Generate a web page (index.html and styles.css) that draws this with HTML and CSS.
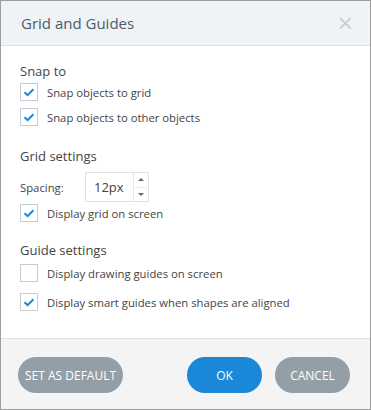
FILE: index.html
```html
<!DOCTYPE html>
<html>
<head>
    <meta charset="UTF-8">
    <title>Grid and Guides</title>
    <link rel="stylesheet" href="styles.css">
</head>
<body>
    <div class="dialog">
        <div class="dialog-header">
            <span class="dialog-title">Grid and Guides</span>
            <button class="close-button">&times;</button>
        </div>

        <div class="dialog-body">
            <div class="section-title">Snap to</div>
            <label class="check-row">
                <span class="checkbox checked">
                    <svg width="18" height="18" viewBox="0 0 18 18"><path d="M4.5 9.2 L7.6 12.2 L13.4 6.2" fill="none" stroke="#1b86d6" stroke-width="2"/></svg>
                </span>
                Snap objects to grid
            </label>
            <label class="check-row">
                <span class="checkbox checked">
                    <svg width="18" height="18" viewBox="0 0 18 18"><path d="M4.5 9.2 L7.6 12.2 L13.4 6.2" fill="none" stroke="#1b86d6" stroke-width="2"/></svg>
                </span>
                Snap objects to other objects
            </label>

            <div class="section-title grid-title">Grid settings</div>
            <div class="spacing-row">
                <span class="spacing-label">Spacing:</span>
                <div class="spinner">
                    <span class="spinner-value">12px</span>
                    <div class="spinner-buttons">
                        <span class="spin-up"></span>
                        <span class="spin-down"></span>
                    </div>
                </div>
            </div>
            <label class="check-row">
                <span class="checkbox checked">
                    <svg width="18" height="18" viewBox="0 0 18 18"><path d="M4.5 9.2 L7.6 12.2 L13.4 6.2" fill="none" stroke="#1b86d6" stroke-width="2"/></svg>
                </span>
                Display grid on screen
            </label>

            <div class="section-title guide-title">Guide settings</div>
            <label class="check-row">
                <span class="checkbox"></span>
                Display drawing guides on screen
            </label>
            <label class="check-row smart-row">
                <span class="checkbox checked">
                    <svg width="18" height="18" viewBox="0 0 18 18"><path d="M4.5 9.2 L7.6 12.2 L13.4 6.2" fill="none" stroke="#1b86d6" stroke-width="2"/></svg>
                </span>
                Display smart guides when shapes are aligned
            </label>
        </div>

        <div class="dialog-footer">
            <button class="btn btn-gray">SET AS DEFAULT</button>
            <div class="footer-right">
                <button class="btn btn-blue">OK</button>
                <button class="btn btn-gray">CANCEL</button>
            </div>
        </div>
    </div>
</body>
</html>
```

FILE: styles.css
```css
/* Dialog "Grid and Guides" */
body {
    margin: 0;
    font-family: "Open Sans", "Noto Sans", sans-serif;
    color: #444;
    background-color: #fff;
}

.dialog {
    width: 371px;
    height: 410px;
    box-sizing: border-box;
    border: 1px solid #9e9e9e;
    display: flex;
    flex-direction: column;
    background-color: #fff;
}

.dialog-header {
    height: 44px;
    flex-shrink: 0;
    background-color: #eff3f6;
    border-bottom: 1px solid #dce1e5;
    display: flex;
    align-items: center;
    justify-content: space-between;
    padding: 0 16px 0 20px;
}

.dialog-title {
    font-size: 15px;
    color: #4c5b6a;
}

.close-button {
    border: none;
    background-color: transparent;
    color: #c9cdd1;
    font-size: 21px;
    line-height: 1;
    padding: 0;
    cursor: pointer;
    font-family: "DejaVu Sans", sans-serif;
}

/* Cuerpo */
.dialog-body {
    flex: 1;
    padding: 15px 19px 0 19px;
}

.section-title {
    font-size: 13px;
    line-height: 20px;
    color: #444;
    margin-bottom: 2px;
}

.grid-title {
    margin-top: 20px;
    margin-bottom: 6px;
}

.guide-title {
    margin-top: 18px;
    margin-bottom: 4px;
}

.check-row {
    display: flex;
    align-items: center;
    gap: 9px;
    height: 18px;
    font-size: 11.3px;
    color: #444;
    margin-bottom: 7px;
}

.smart-row {
    margin-top: 11px;
}

.checkbox {
    width: 16px;
    height: 16px;
    border: 1px solid #c5ccd3;
    background-color: #fff;
    position: relative;
    flex-shrink: 0;
}

.checkbox svg {
    position: absolute;
    top: -1px;
    left: -1px;
}

.spacing-row {
    display: flex;
    align-items: center;
    margin-bottom: 2px;
}

.spacing-label {
    width: 65px;
    font-size: 11.3px;
}

.spinner {
    width: 64px;
    height: 30px;
    box-sizing: border-box;
    border: 1px solid #dfe3e6;
    display: flex;
    background-color: #fff;
}

.spinner-value {
    flex: 1;
    font-size: 13px;
    line-height: 28px;
    padding-left: 8px;
    color: #444;
}

.spinner-buttons {
    width: 14px;
    border-left: 1px solid #e3e6e9;
    display: flex;
    flex-direction: column;
}

.spin-up,
.spin-down {
    flex: 1;
    display: flex;
    align-items: center;
    justify-content: center;
}

.spin-down {
    border-top: 1px solid #eceef0;
}

.spin-up::before {
    content: "";
    border-left: 3px solid transparent;
    border-right: 3px solid transparent;
    border-bottom: 3px solid #666;
}

.spin-down::before {
    content: "";
    border-left: 3px solid transparent;
    border-right: 3px solid transparent;
    border-top: 3px solid #666;
}

/* Pie */
.dialog-footer {
    height: 71px;
    flex-shrink: 0;
    box-sizing: border-box;
    background-color: #f4f4f4;
    border-top: 1px solid #dce1e5;
    display: flex;
    align-items: flex-start;
    justify-content: space-between;
    padding: 18px 20px 0 17px;
}

.footer-right {
    display: flex;
    gap: 13px;
}

.btn {
    height: 36px;
    border: none;
    border-radius: 18px;
    color: #fff;
    font-family: "Open Sans", "Noto Sans", sans-serif;
    font-size: 12px;
    padding: 0;
    cursor: pointer;
}

.btn-gray {
    background-color: #949ea6;
    min-width: 75px;
    padding: 0 7px;
}

.btn-blue {
    background-color: #1a87d8;
    width: 75px;
}
```
